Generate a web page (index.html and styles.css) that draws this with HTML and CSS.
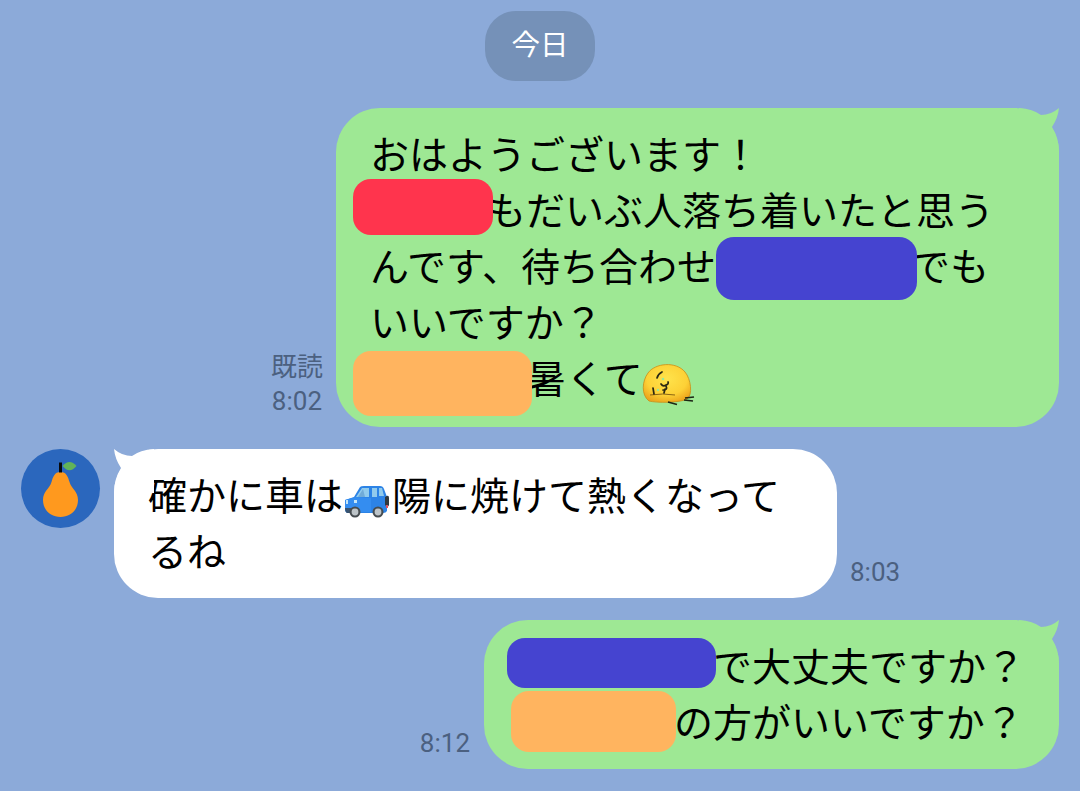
FILE: index.html
```html
<!DOCTYPE html>
<html lang="ja">
<head>
    <meta charset="UTF-8">
    <title>トーク</title>
    <link rel="stylesheet" href="styles.css">
</head>
<body>
    <div class="chat">
        <div class="date">今日</div>

        <div class="row sent">
            <div class="meta"><span class="read">既読</span><span class="time">8:02</span></div>
            <div class="bubble green long">
                <svg class="tail" viewBox="0 0 40 44"><path d="M0 0Q14 1 22 7Q32 7 40 0Q39 10 33 19Q40 30 40 44H0Z"/></svg>
                <div class="line">おはようございます！</div>
                <div class="line"><span class="mark red"></span>もだいぶ人落ち着いたと思う</div>
                <div class="line">んです、待ち合わせ<span class="mark blue place"></span>でも</div>
                <div class="line">いいですか？</div>
                <div class="line"><span class="mark orange reason"></span>暑くて
                    <svg class="face" viewBox="0 0 54 46">
                        <defs>
                            <radialGradient id="skin" cx=".5" cy=".38" r=".65">
                                <stop offset="0" stop-color="#ffe34c"/>
                                <stop offset=".65" stop-color="#fdd136"/>
                                <stop offset="1" stop-color="#eca51c"/>
                            </radialGradient>
                        </defs>
                        <path d="M7 40C-1 34 0 20 6 12C13 2 34 0 43 11C49 18 51 34 45 38C38 42 14 42 7 40Z" fill="url(#skin)" stroke="#c98e18" stroke-width=".8"/>
                        <path d="M8 34Q21 32 33 34" fill="none" stroke="#8a6412" stroke-width="1"/>
                        <path d="M15 17Q16 13 20 11M19 23Q21 26 24 24Q27 23 26 21M24 25Q26 29 21 29M11 27L12 33M23 28L22 32" fill="none" stroke="#292713" stroke-width="1.7" stroke-linecap="round"/>
                        <circle cx="21" cy="18" r="1.3"/><circle cx="16" cy="29" r="1.2"/>
                        <path d="M26 41L35 43.500M42 39L51 40M43 37L52 36" fill="none" stroke="#1c2616" stroke-width="1.7"/>
                    </svg>
                </div>
            </div>
        </div>

        <div class="row received">
            <svg class="avatar" viewBox="0 0 80 80">
                <circle cx="39.500" cy="39.500" r="39.500" fill="#2b67bd"/>
                <path d="M39.500 23C33.500 23 32 28 30.500 33C28.500 40 22 42 22 51C22 61 29.500 68 39.500 68C49.500 68 57 61 57 51C57 42 50.500 40 48.500 33C47 28 45.500 23 39.500 23Z" fill="#ff991e"/>
                <path d="M38 13.500H41V23.500H38Z" fill="#080808"/>
                <path d="M41.500 17Q48.500 9 55.500 17Q48.500 25.500 41.500 17Z" fill="#62b358"/>
            </svg>
            <div class="bubble white">
                <svg class="tail" viewBox="0 0 40 44"><path d="M0 0Q14 1 22 7Q32 7 40 0Q39 10 33 19Q40 30 40 44H0Z"/></svg>
                <div class="line">確かに車は
                    <svg class="car" viewBox="0 0 48 34">
                        <path d="M1 15L10 12L16 2Q17 1 20 1H36Q39 1 40 4L43 12V26Q42 28 39 28H4Q1 28 1 24Z" fill="#2c83e6"/>
                        <path d="M1 15L12 12L27 13V27H4Q1 26 1 23Z" fill="#348df0"/>
                        <path d="M12 12L18 3H25V12ZM28 3H33V12H28ZM35 3H38L40 11H35Z" fill="#91cbed"/>
                        <path d="M14 12L19 4L21 12Z" fill="#70abd8"/>
                        <path d="M1 23H7V28H3Q1 27 1 23Z" fill="#385370"/>
                        <path d="M41 12Q45 9 45 13V20Q44 23 41 20Z" fill="#30383d"/>
                        <path d="M2 15H4V19H2ZM10 15H13V18H10Z" fill="#c5e6f8"/>
                        <path d="M42 20H44V23H42Z" fill="#da5260"/>
                        <circle cx="11" cy="27" r="5.500" fill="#464c50"/><circle cx="11" cy="27" r="3.400" fill="#bdc4c8"/>
                        <circle cx="34" cy="27" r="5.500" fill="#464c50"/><circle cx="34" cy="27" r="3.400" fill="#bdc4c8"/>
                    </svg>陽に焼けて熱くなって</div>
                <div class="line">るね</div>
            </div>
            <div class="meta"><span class="time">8:03</span></div>
        </div>

        <div class="row sent">
            <div class="meta"><span class="time">8:12</span></div>
            <div class="bubble green short">
                <svg class="tail" viewBox="0 0 40 44"><path d="M0 0Q14 1 22 7Q32 7 40 0Q39 10 33 19Q40 30 40 44H0Z"/></svg>
                <div class="line"><span class="mark blue first"></span>で大丈夫ですか？</div>
                <div class="line"><span class="mark orange second"></span>の方がいいですか？</div>
            </div>
        </div>
    </div>
</body>
</html>
```
FILE: styles.css
```css
* {
    box-sizing: border-box;
}
body {
    margin: 0;
    background: #8caad9;
    font-family: Roboto, "Noto Sans CJK JP", sans-serif;
}
.chat {
    display: flex;
    flex-direction: column;
    height: 791px;
    padding: 11px 21px 0;
    overflow: hidden;
}
.date {
    align-self: center;
    width: 110px;
    height: 70px;
    margin-bottom: 27px;
    border-radius: 31px;
    background: #7591b8;
    color: #fff;
    font-size: 28.5px;
    line-height: 70px;
    text-align: center;
}
.row {
    display: flex;
    align-items: flex-end;
    margin-bottom: 22px;
}
.sent {
    justify-content: flex-end;
}
.bubble {
    position: relative;
    width: 723px;
    height: 149px;
    padding: 16px 34px 0;
    border-radius: 44px;
    color: #000;
    font-family: "Noto Sans CJK JP", sans-serif;
    font-size: 39px;
}
.green {
    background: #9ee894;
    fill: #9ee894;
}
.long {
    height: 319px;
}
.white {
    background: #fff;
    fill: #fff;
}
.short {
    width: 575px;
}
.line {
    display: flex;
    align-items: center;
    height: 56px;
    line-height: 56px;
    white-space: nowrap;
}
.tail {
    position: absolute;
    top: 0;
    right: 0;
    width: 40px;
    height: 44px;
}
.white .tail {
    right: auto;
    left: 0;
    transform: scaleX(-1);
}
.meta {
    display: flex;
    flex-direction: column;
    align-items: flex-end;
    margin: 0 14px 8px 13px;
    color: #4b6080;
    font-size: 26px;
    line-height: 35px;
}
.read {
    height: 34px;
    margin-right: -1px;
}
.avatar {
    align-self: flex-start;
    flex: none;
    width: 80px;
    height: 80px;
    margin-right: 13px;
}

/* covered words */
.mark {
    position: relative;
    z-index: 1;
    flex: none;
    border-radius: 18px;
}
.red {
    width: 140px;
    height: 56px;
    margin: -2px -6px 0 -17px;
    background: #ff344d;
}
.blue {
    background: #4544d0;
}
.orange {
    background: #ffb45f;
}
.place {
    width: 201px;
    height: 63px;
    margin: 8px -6px 0 0;
}
.reason {
    width: 179px;
    height: 65px;
    margin: 14px -5px 0 -17px;
}
.first {
    width: 209px;
    height: 50px;
    margin: -3px -3px 0 -11px;
}
.second {
    width: 165px;
    height: 61px;
    margin: 2px -2px 0 -7px;
}
.face {
    flex: none;
    width: 54px;
    height: 46px;
    margin: 15px 0 0 -1px;
}
.car {
    flex: none;
    width: 48px;
    height: 34px;
    margin: 18px 0 0 1px;
}
```
